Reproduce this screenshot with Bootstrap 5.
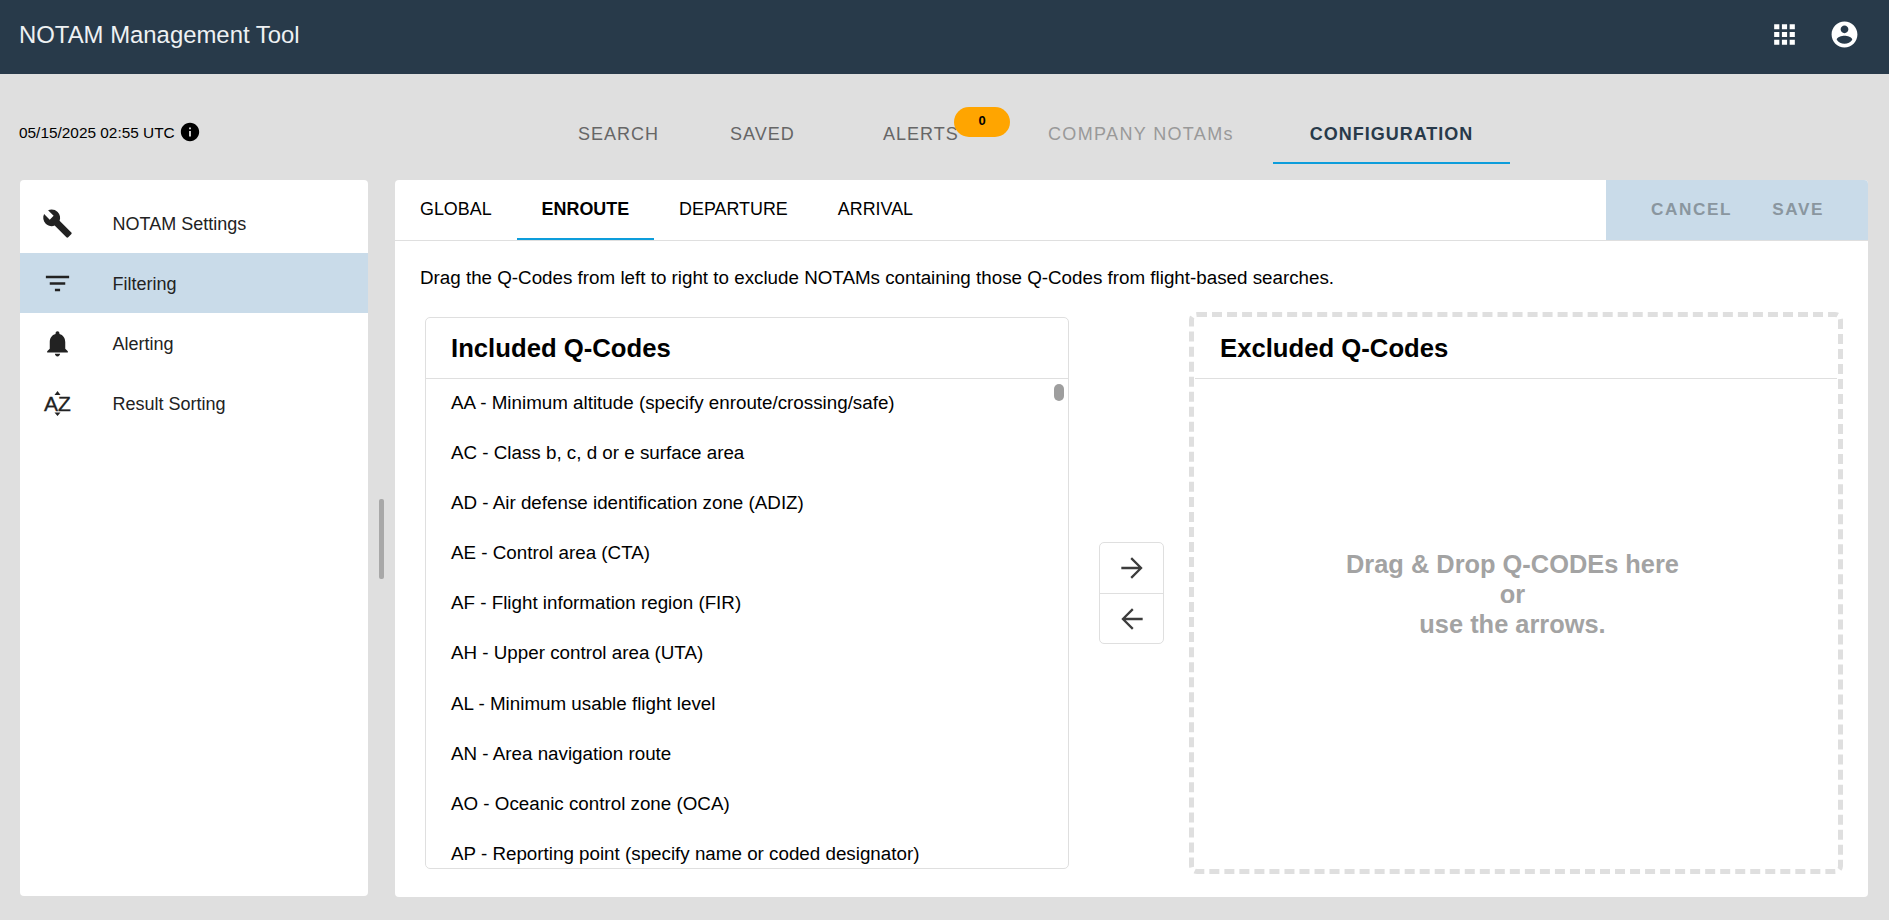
<!DOCTYPE html>
<html lang="en">
<head>
    <meta charset="UTF-8">
    <meta name="viewport" content="width=device-width, initial-scale=1.0">
    <title>NOTAM Management Tool</title>
    <link href="https://cdn.jsdelivr.net/npm/bootstrap@5.3.0/dist/css/bootstrap.min.css" rel="stylesheet">
    <style>
        html, body { height: 100%; }
        body {
            background: #dfdfdf;
            color: #000;
            font-family: "Liberation Sans", Arial, sans-serif;
            font-size: 18.8px;
            overflow: hidden;
        }

        /* Top bar */
        .top-bar { height: 74px; background: #283a4a; padding: 0 29px 5px 19px; }
        .top-title { font-size: 23.9px; color: #eef1f3; font-weight: 400; }
        .top-icon { width: 31px; height: 31px; fill: #fff; display: block; }
        .top-icon + .top-icon { margin-left: 29px; }

        /* Main navigation row */
        .nav-strip { height: 106px; position: relative; }
        .date-box { position: absolute; left: 19px; top: 47px; font-size: 15.4px; line-height: 24px; }
        .info-icon { width: 22px; height: 22px; margin-left: 4px; vertical-align: -5px; }
        .main-link {
            position: absolute; top: 0; height: 90px; line-height: 120px;
            font-size: 18px; letter-spacing: 1px; color: #666; white-space: nowrap;
            text-decoration: none; text-align: center;
        }
        .main-link.is-off { color: #999; letter-spacing: 1.35px; }
        .main-link.is-on { color: #283a4a; font-weight: 700; border-bottom: 2px solid #0d9ddb; }
        .count-pill {
            position: absolute; top: 33px; left: 954px; width: 56px; height: 30px;
            background: #ffa500; border-radius: 15px; text-align: center;
            font-size: 13px; font-weight: 700; line-height: 28px;
        }

        /* Content area */
        .side-panel { width: 348px; margin-left: 20px; height: 716px; background: #fff; border-radius: 4px; padding-top: 13px; flex: none; font-size: 18px; }
        .side-item { height: 60px; color: #222; }
        .side-item.is-on { background: #c9dbe9; }
        .side-ico { width: 75px; flex: none; display: flex; justify-content: center; }
        .side-ico svg { width: 31px; height: 31px; fill: #222; display: block; }
        .side-text { margin-left: 17.5px; padding-top: 3px; }
        .drag-col { width: 27px; flex: none; position: relative; }
        .drag-thumb { position: absolute; left: 11px; top: 319px; width: 5px; height: 80px; background: #a8a8a8; border-radius: 2px; }

        .work-panel { width: 1473px; height: 717px; background: #fff; border-radius: 4px; overflow: hidden; flex: none; }
        .tab-row { height: 61px; border-bottom: 1px solid #dfdfdf; }
        .sub-tab {
            height: 60px; line-height: 58px; padding: 0 25px; font-size: 17.9px; color: #000;
            text-decoration: none; white-space: nowrap;
        }
        .sub-tab.is-on { font-weight: 700; border-bottom: 2px solid #0d9ddb; }
        .act-box { width: 262px; height: 60px; background: #c9dbe9; gap: 40px; padding-left: 45px; }
        .act-btn { font-size: 17.2px; letter-spacing: 1.6px; color: #8a969f; font-weight: 700; line-height: 58px; }

        .hint-text { padding: 25px 25px 0; height: 71px; line-height: 24px; }
        .code-row { padding: 0 25px; height: 562px; }
        .code-wrap { width: 654px; height: 562px; border: 5px dashed transparent; border-radius: 8px; flex: none; }
        .code-wrap.is-dashed { border-color: #dfdfdf; }
        .code-card { height: 100%; border: 1px solid transparent; border-radius: 5px; overflow: hidden; position: relative; }
        .code-wrap:not(.is-dashed) .code-card { border-color: #dfdfdf; }
        .code-head { height: 61px; border-bottom: 1px solid #dfdfdf; padding: 0 25px; font-size: 25.7px; font-weight: 700; line-height: 60px; flex: none; }
        .code-line { height: 50.1px; padding: 0 25px; line-height: 47px; white-space: nowrap; }
        .code-thumb { position: absolute; right: 4px; top: 66px; width: 10px; height: 17px; background: #9e9e9e; border-radius: 5px; }
        .move-col { width: 115px; flex: none; }
        .move-box { width: 65px; height: 102px; border: 1px solid #dfdfdf; border-radius: 5px; }
        .move-btn { height: 50px; }
        .move-btn + .move-btn { border-top: 1px solid #dfdfdf; }
        .move-btn svg { width: 32px; height: 32px; fill: #3c3c3c; display: block; }
        .drop-note { color: #a3a3a3; font-size: 25.4px; line-height: 30px; text-align: center; font-weight: 700; padding: 0 7px 60px 0; }
    </style>
</head>
<body>
    <!-- Top bar -->
    <header class="top-bar d-flex align-items-center justify-content-between">
        <span class="top-title">NOTAM Management Tool</span>
        <div class="d-flex align-items-center">
            <svg class="top-icon" viewBox="0 0 24 24"><path d="M4 8h4V4H4v4zm6 12h4v-4h-4v4zm-6 0h4v-4H4v4zm0-6h4v-4H4v4zm6 0h4v-4h-4v4zm6-10v4h4V4h-4zm-6 4h4V4h-4v4zm6 6h4v-4h-4v4zm0 6h4v-4h-4v4z"/></svg>
            <svg class="top-icon" viewBox="0 0 24 24"><path d="M12 2C6.48 2 2 6.48 2 12s4.48 10 10 10 10-4.48 10-10S17.52 2 12 2zm0 3c1.66 0 3 1.34 3 3s-1.34 3-3 3-3-1.34-3-3 1.34-3 3-3zm0 14.2c-2.5 0-4.71-1.28-6-3.22.03-1.99 4-3.08 6-3.08 1.99 0 5.97 1.09 6 3.08-1.29 1.94-3.5 3.22-6 3.22z"/></svg>
        </div>
    </header>

    <!-- Main navigation -->
    <div class="nav-strip">
        <div class="date-box">05/15/2025 02:55 UTC<svg class="info-icon" viewBox="0 0 24 24"><path d="M12 2C6.48 2 2 6.48 2 12s4.48 10 10 10 10-4.48 10-10S17.52 2 12 2zm1 15h-2v-6h2v6zm0-8h-2V7h2v2z"/></svg></div>
        <a class="main-link" style="left:578px">SEARCH</a>
        <a class="main-link" style="left:730px">SAVED</a>
        <a class="main-link" style="left:883px">ALERTS</a>
        <span class="count-pill">0</span>
        <a class="main-link is-off" style="left:1048px">COMPANY NOTAMs</a>
        <a class="main-link is-on" style="left:1273px;width:237px">CONFIGURATION</a>
    </div>

    <div class="d-flex">
        <aside class="side-panel">
            <div class="side-item d-flex align-items-center">
                <div class="side-ico"><svg viewBox="0 0 24 24"><path d="M22.7 19l-9.1-9.1c.9-2.3.4-5-1.5-6.9-2-2-5-2.4-7.4-1.3L9 6 6 9 1.6 4.7C.4 7.1.9 10.1 2.9 12.1c1.9 1.9 4.6 2.4 6.9 1.5l9.1 9.1c.4.4 1 .4 1.4 0l2.3-2.3c.5-.4.5-1.1.1-1.4z"/></svg></div>
                <span class="side-text">NOTAM Settings</span>
            </div>
            <div class="side-item is-on d-flex align-items-center">
                <div class="side-ico"><svg viewBox="0 0 24 24"><path d="M10 18h4v-2h-4v2zM3 6v2h18V6H3zm3 7h12v-2H6v2z"/></svg></div>
                <span class="side-text">Filtering</span>
            </div>
            <div class="side-item d-flex align-items-center">
                <div class="side-ico"><svg viewBox="0 0 24 24"><path d="M12 22c1.1 0 2-.9 2-2h-4c0 1.1.89 2 2 2zm6-6v-5c0-3.07-1.64-5.64-4.5-6.32V4c0-.83-.67-1.5-1.5-1.5s-1.5.67-1.5 1.5v.68C7.63 5.36 6 7.92 6 11v5l-2 2v1h16v-1l-2-2z"/></svg></div>
                <span class="side-text">Alerting</span>
            </div>
            <div class="side-item d-flex align-items-center">
                <div class="side-ico"><svg viewBox="0 0 31 31"><path d="M15.500 3l3 4h-6zM15.500 28l3-3.500h-6z"/><text x="15.500" y="22.500" text-anchor="middle" font-size="21" stroke="#222" stroke-width=".3" font-family="Liberation Sans, Arial, sans-serif">AZ</text></svg></div>
                <span class="side-text">Result Sorting</span>
            </div>
        </aside>
        <div class="drag-col"><div class="drag-thumb"></div></div>
        <main class="work-panel">
            <div class="tab-row d-flex justify-content-between">
                <div class="d-flex">
                    <a class="sub-tab">GLOBAL</a>
                    <a class="sub-tab is-on">ENROUTE</a>
                    <a class="sub-tab">DEPARTURE</a>
                    <a class="sub-tab">ARRIVAL</a>
                </div>
                <div class="act-box d-flex">
                    <span class="act-btn">CANCEL</span>
                    <span class="act-btn">SAVE</span>
                </div>
            </div>
            <div class="hint-text">Drag the Q-Codes from left to right to exclude NOTAMs containing those Q-Codes from flight-based searches.</div>
            <div class="code-row d-flex">
                <div class="code-wrap">
                    <div class="code-card d-flex flex-column">
                        <div class="code-head">Included Q-Codes</div>
                        <div class="code-list">
                            <div class="code-line">AA - Minimum altitude (specify enroute/crossing/safe)</div>
                            <div class="code-line">AC - Class b, c, d or e surface area</div>
                            <div class="code-line">AD - Air defense identification zone (ADIZ)</div>
                            <div class="code-line">AE - Control area (CTA)</div>
                            <div class="code-line">AF - Flight information region (FIR)</div>
                            <div class="code-line">AH - Upper control area (UTA)</div>
                            <div class="code-line">AL - Minimum usable flight level</div>
                            <div class="code-line">AN - Area navigation route</div>
                            <div class="code-line">AO - Oceanic control zone (OCA)</div>
                            <div class="code-line">AP - Reporting point (specify name or coded designator)</div>
                        </div>
                        <div class="code-thumb"></div>
                    </div>
                </div>
                <div class="move-col d-flex align-items-center justify-content-center">
                    <div class="move-box">
                        <div class="move-btn d-flex align-items-center justify-content-center"><svg viewBox="0 0 24 24"><path d="M12 4l-1.200 1.200 5.900 5.900H4v1.800h12.700l-5.900 5.900L12 20l8-8z"/></svg></div>
                        <div class="move-btn d-flex align-items-center justify-content-center"><svg viewBox="0 0 24 24"><path d="M12 4l1.200 1.200-5.900 5.900H20v1.800H7.300l5.900 5.900L12 20l-8-8z"/></svg></div>
                    </div>
                </div>
                <div class="code-wrap is-dashed">
                    <div class="code-card d-flex flex-column">
                        <div class="code-head">Excluded Q-Codes</div>
                        <div class="flex-grow-1 d-flex align-items-center justify-content-center">
                            <div class="drop-note">Drag &amp; Drop Q-CODEs here<br>or<br>use the arrows.</div>
                        </div>
                    </div>
                </div>
            </div>
        </main>
    </div>
    <script src="https://cdn.jsdelivr.net/npm/bootstrap@5.3.0/dist/js/bootstrap.bundle.min.js"></script>
</body>
</html>
